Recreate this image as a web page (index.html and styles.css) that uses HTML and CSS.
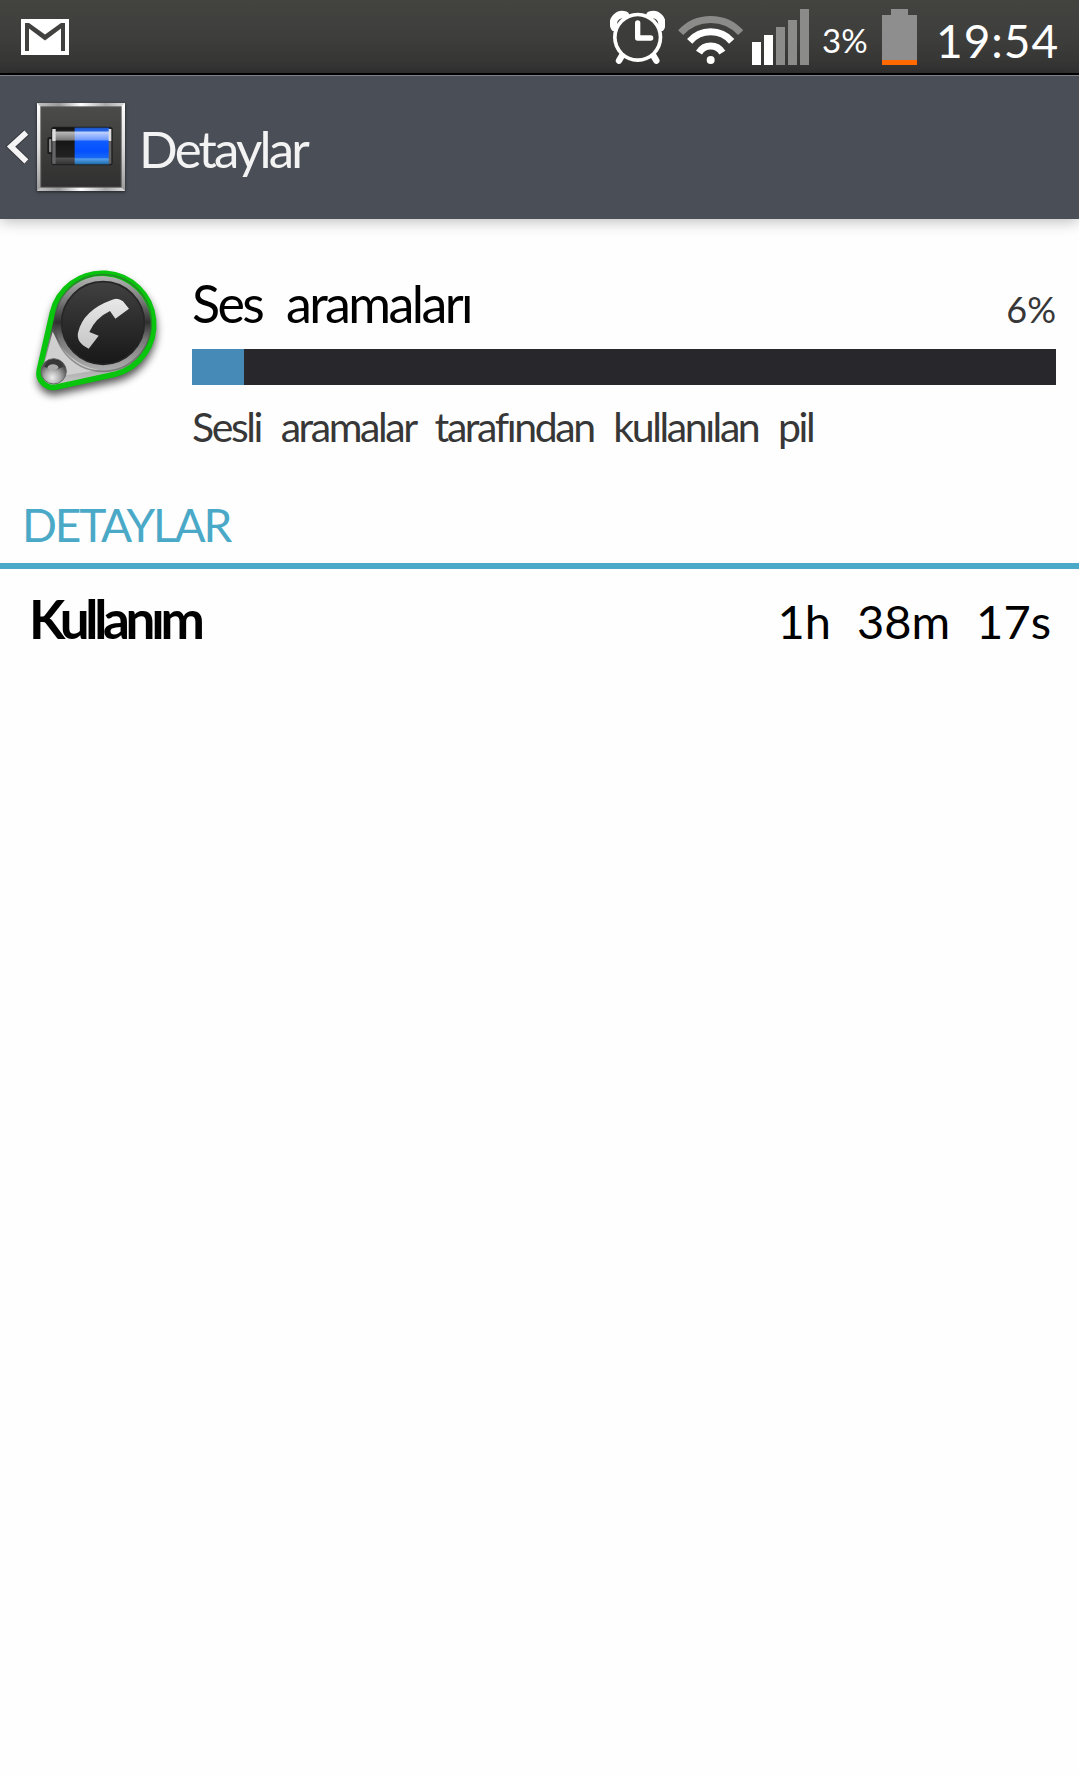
FILE: index.html
```html
<!DOCTYPE html>
<html lang="tr">
<head>
  <meta charset="UTF-8" />
  <title>Detaylar</title>
  <meta name="viewport" content="width=device-width, initial-scale=1.0" />
  <link rel="stylesheet" href="styles.css">
</head>
<body>
  <div class="status-bar">
    <svg class="gmail" width="48" height="36" viewBox="0 0 48 36">
      <rect width="48" height="36" fill="#fff" />
      <path d="M4 4H8L24 15.5L40 4H44V32H40V9.5L24 21.5L8 9.5V32H4Z" fill="#41423f" />
    </svg>

    <div class="status-icons">
      <svg class="alarm" width="55" height="55" viewBox="60 30 165 165">
        <g fill="none" stroke="#fff" stroke-linecap="round">
          <path d="M98 163L87 182M188 163L199 182" stroke-width="19" />
          <path d="M73 82A27 27 0 0 1 106 45M213 82A27 27 0 0 0 180 45" stroke-width="22" />
        </g>
        <circle cx="143" cy="112" r="74" fill="#fff" />
        <circle cx="143" cy="112" r="63" fill="#3c3d3a" />
        <path d="M143 69V114H182" fill="none" stroke="#fff" stroke-width="16" stroke-linecap="round" stroke-linejoin="round" />
      </svg>
      <svg class="wifi" width="67" height="50" viewBox="261 45 201 150">
        <g fill="none" stroke="#fff" stroke-width="21">
          <path d="M272 98A122 122 0 0 1 452 98" stroke="#8b8b8a" />
          <path d="M299 124A84 84 0 0 1 425 124" />
          <path d="M327 158A41 41 0 0 1 397 158" />
        </g>
        <circle cx="362" cy="180" r="12" fill="#fff" />
      </svg>
      <svg class="signal" width="57" height="56" viewBox="0 0 57 56">
        <path d="M0 33H9V56H0ZM12 26H21V56H12Z" fill="#fff" />
        <path d="M24 18H33V56H24ZM36 11H45V56H36ZM48 0H57V56H48Z" fill="#8b8b8a" />
      </svg>
      <span class="percent">3%</span>
      <svg class="battery" width="35" height="56" viewBox="0 0 35 56">
        <path d="M9 0H26V6H35V51H0V6H9Z" fill="#8e8e8e" />
        <rect y="51" width="35" height="5" fill="#ff6a00" />
      </svg>
      <span class="clock">19:54</span>
    </div>
  </div>

  <div class="action-bar">
    <svg class="back" width="26" height="40" viewBox="15 384 78 120">
      <path d="M79 401L33 443L79 487" fill="none" stroke="#25272b" stroke-opacity="0.45" stroke-width="24" />
      <path d="M79 401L33 443L79 487" fill="none" stroke="#f5f5f5" stroke-width="17" />
    </svg>
    <svg class="app-icon" width="88" height="88" viewBox="21 24 264 264">
      <defs>
        <linearGradient id="frame" x1="0" y1="0" x2="1" y2="0">
          <stop offset="0" stop-color="#c4c4c4" />
          <stop offset="0.25" stop-color="#999" />
          <stop offset="0.5" stop-color="#fff" />
          <stop offset="0.78" stop-color="#aaa" />
          <stop offset="1" stop-color="#ddd" />
        </linearGradient>
        <linearGradient id="side" x1="0" y1="0" x2="0" y2="1">
          <stop offset="0" stop-color="#fff" />
          <stop offset="0.5" stop-color="#ddd" />
          <stop offset="1" stop-color="#999" />
        </linearGradient>
        <linearGradient id="panel" x1="0" y1="0" x2="0" y2="1">
          <stop offset="0" stop-color="#4b4b49" />
          <stop offset="1" stop-color="#303030" />
        </linearGradient>
        <linearGradient id="empty" x1="0" y1="0" x2="0" y2="1">
          <stop offset="0" stop-color="#111" />
          <stop offset="0.1" stop-color="#222" />
          <stop offset="0.11" stop-color="#bbb" />
          <stop offset="0.34" stop-color="#777" />
          <stop offset="0.36" stop-color="#161616" />
          <stop offset="0.8" stop-color="#222" />
          <stop offset="0.83" stop-color="#505050" />
          <stop offset="1" stop-color="#333" />
        </linearGradient>
        <linearGradient id="charge" x1="0" y1="0" x2="0" y2="1">
          <stop offset="0" stop-color="#1a54c8" />
          <stop offset="0.1" stop-color="#2868e8" />
          <stop offset="0.11" stop-color="#c4d5ff" />
          <stop offset="0.34" stop-color="#6b98ff" />
          <stop offset="0.36" stop-color="#0f5cff" />
          <stop offset="0.65" stop-color="#0450ff" />
          <stop offset="0.82" stop-color="#1868f4" />
          <stop offset="0.85" stop-color="#55a0ee" />
          <stop offset="1" stop-color="#1e6aa5" />
        </linearGradient>
      </defs>
      <rect x="21" y="24" width="264" height="264" fill="url(#side)" />
      <path d="M21 24H285L273 36H33ZM21 288H285L273 276H33Z" fill="url(#frame)" />
      <rect x="31" y="34" width="244" height="244" fill="#555" />
      <rect x="34" y="37" width="238" height="238" fill="url(#panel)" />
      <rect x="52" y="126" width="16" height="52" rx="6" fill="#1c1c1c" />
      <rect x="57" y="132" width="9" height="40" rx="3" fill="#888" />
      <rect x="64" y="95" width="184" height="116" rx="8" fill="#1d1d1f" />
      <rect x="67" y="98" width="68" height="110" rx="4" fill="url(#empty)" />
      <rect x="134" y="98" width="104" height="110" fill="url(#charge)" />
      <path d="M67 102H77V138H67ZM236 102H244V138H236Z" fill="#ddd" />
      <path d="M67 138H77V206H67ZM236 138H244V206H236Z" fill="#656568" />
    </svg>
    <h1>Detaylar</h1>
  </div>

  <div class="usage">
    <svg class="call-icon" width="160" height="160" viewBox="0 0 480 480">
      <defs>
        <linearGradient id="metal" x1="0" y1="0" x2="0" y2="1">
          <stop offset="0" stop-color="#bbb" />
          <stop offset="0.25" stop-color="#777" />
          <stop offset="0.43" stop-color="#303030" />
          <stop offset="0.58" stop-color="#777" />
          <stop offset="1" stop-color="#ccc" />
        </linearGradient>
        <linearGradient id="disc" x1="0" y1="0" x2="0" y2="1">
          <stop offset="0" stop-color="#414141" />
          <stop offset="1" stop-color="#181818" />
        </linearGradient>
        <linearGradient id="handset" x1="0" y1="0" x2="0" y2="1">
          <stop offset="0" stop-color="#e8e8e8" />
          <stop offset="1" stop-color="#c6c6c6" />
        </linearGradient>
        <radialGradient id="knob" cx="0.45" cy="0.75" r="0.7">
          <stop offset="0" stop-color="#eee" />
          <stop offset="0.45" stop-color="#aaa" />
          <stop offset="1" stop-color="#333" />
        </radialGradient>
        <filter id="blur" x="-20%" y="-20%" width="140%" height="140%">
          <feGaussianBlur stdDeviation="12" />
        </filter>
      </defs>
      <path d="M97 189A154 154 0 1 1 285 373L110 411A43 43 0 0 1 58 360Z" fill="#000" stroke="#000" stroke-width="12" opacity="0.7" transform="translate(2 16)" filter="url(#blur)" />
      <path d="M97 189A154 154 0 1 1 285 373L110 411A43 43 0 0 1 58 360Z" fill="url(#metal)" stroke="#09c50d" stroke-width="17" />
      <path d="M98 245L72 345Q135 315 138 376L235 360Q140 340 98 245Z" fill="#cfcfcf" />
      <circle cx="249" cy="219" r="145" fill="none" stroke="#444" stroke-opacity="0.45" stroke-width="5" />
      <circle cx="249" cy="219" r="124" fill="url(#disc)" stroke="#262626" stroke-width="5" />
      <path d="M273 151Q292 140 309 154L327 176L286 206L270 183Q226 204 208 246L236 257L206 296Q168 277 174 248Q190 181 273 151Z" fill="url(#handset)" />
      <circle cx="101" cy="364" r="38" fill="url(#knob)" stroke="#666" stroke-width="3" />
      <path d="M72 350A32 32 0 0 1 130 350L104 361Z" fill="#383838" />
      <ellipse cx="99" cy="352" rx="16" ry="9" fill="#aaa" />
    </svg>
    <div class="usage-info">
      <div class="usage-head">
        <h2>Ses aramaları</h2>
        <span class="usage-percent">6%</span>
      </div>
      <div class="progress">
        <div class="progress-fill" style="width: 6%"></div>
      </div>
      <p class="summary">Sesli aramalar tarafından kullanılan pil</p>
    </div>
  </div>

  <h3 class="section-title">DETAYLAR</h3>

  <div class="detail-row">
    <span class="detail-label">Kullanım</span>
    <span class="detail-value">1h 38m 17s</span>
  </div>
</body>
</html>
```
FILE: styles.css
```css
:root {
  --bg: #fefefe;
  --bar: #4a4e56;
  --accent: #4ba9c8;
  --text: #000;
  --muted: #373737;
}

* {
  box-sizing: border-box;
}

body {
  margin: 0;
  min-height: 100vh;
  font-family: Lato, 'Open Sans', sans-serif;
  background: var(--bg);
  color: var(--text);
  white-space: nowrap;
}

h1, h2, h3, p {
  margin: 0;
  font-weight: 400;
}

svg {
  display: block;
  flex: none;
}

.status-bar {
  display: flex;
  justify-content: space-between;
  align-items: flex-start;
  height: 75px;
  padding: 9px 20px 0 21px;
  background: linear-gradient(#434440, #3e3f3c 50%, #323232);
  border-bottom: 2px solid #000;
  color: #fff;
}

.gmail {
  margin-top: 10px;
}

.status-icons {
  display: flex;
  align-items: flex-start;
}

.alarm {
  margin: 1px 12px 0 0;
}

.wifi {
  margin: 6px 8px 0 0;
}

.percent {
  width: 46px;
  margin: 11px 14px 0 13px;
  font-size: 33px;
  line-height: 40px;
}

.clock {
  width: 123px;
  margin: 7px 0 0 19px;
  font-size: 46px;
  line-height: 50px;
  letter-spacing: 1px;
}

.action-bar {
  display: flex;
  align-items: center;
  height: 144px;
  padding: 0 0 2px 5px;
  background: var(--bar);
  border-top: 1px solid #7d8084;
  box-shadow: 0 2px 14px rgba(0, 0, 0, 0.28);
}

.app-icon {
  margin-left: 6px;
  box-shadow: 0 1px 3px rgba(0, 0, 0, 0.6);
}

.action-bar h1 {
  margin-left: 14px;
  padding-top: 5px;
  font-size: 51px;
  line-height: 60px;
  letter-spacing: -2.8px;
  color: #f3f3f3;
}

.usage {
  display: flex;
  padding: 31px 23px 0 20px;
}

.usage-info {
  flex: 1;
  margin-left: 12px;
  padding-top: 23px;
}

.usage-head {
  display: flex;
  justify-content: space-between;
  align-items: baseline;
  height: 60px;
}

.usage-head h2 {
  font-size: 52px;
  line-height: 60px;
  letter-spacing: -2.6px;
  word-spacing: 13px;
}

.usage-percent {
  font-size: 36px;
  color: var(--muted);
}

.progress {
  height: 36px;
  margin-top: 16px;
  background: #27272c;
}

.progress-fill {
  height: 100%;
  background: #468bb8;
}

.summary {
  margin-top: 17px;
  font-size: 41px;
  line-height: 50px;
  letter-spacing: -2.4px;
  word-spacing: 11.5px;
  color: var(--muted);
}

.section-title {
  height: 72px;
  margin-top: 45px;
  padding-left: 22px;
  border-bottom: 6px solid var(--accent);
  font-size: 46px;
  line-height: 56px;
  letter-spacing: -2.2px;
  color: var(--accent);
}

.detail-row {
  display: flex;
  justify-content: space-between;
  align-items: baseline;
  padding: 20px 28px 0 29px;
}

.detail-label {
  font-size: 53px;
  font-weight: 700;
  line-height: 60px;
  letter-spacing: -4.3px;
}

.detail-value {
  font-size: 47px;
  line-height: 60px;
  word-spacing: 14px;
}
```
